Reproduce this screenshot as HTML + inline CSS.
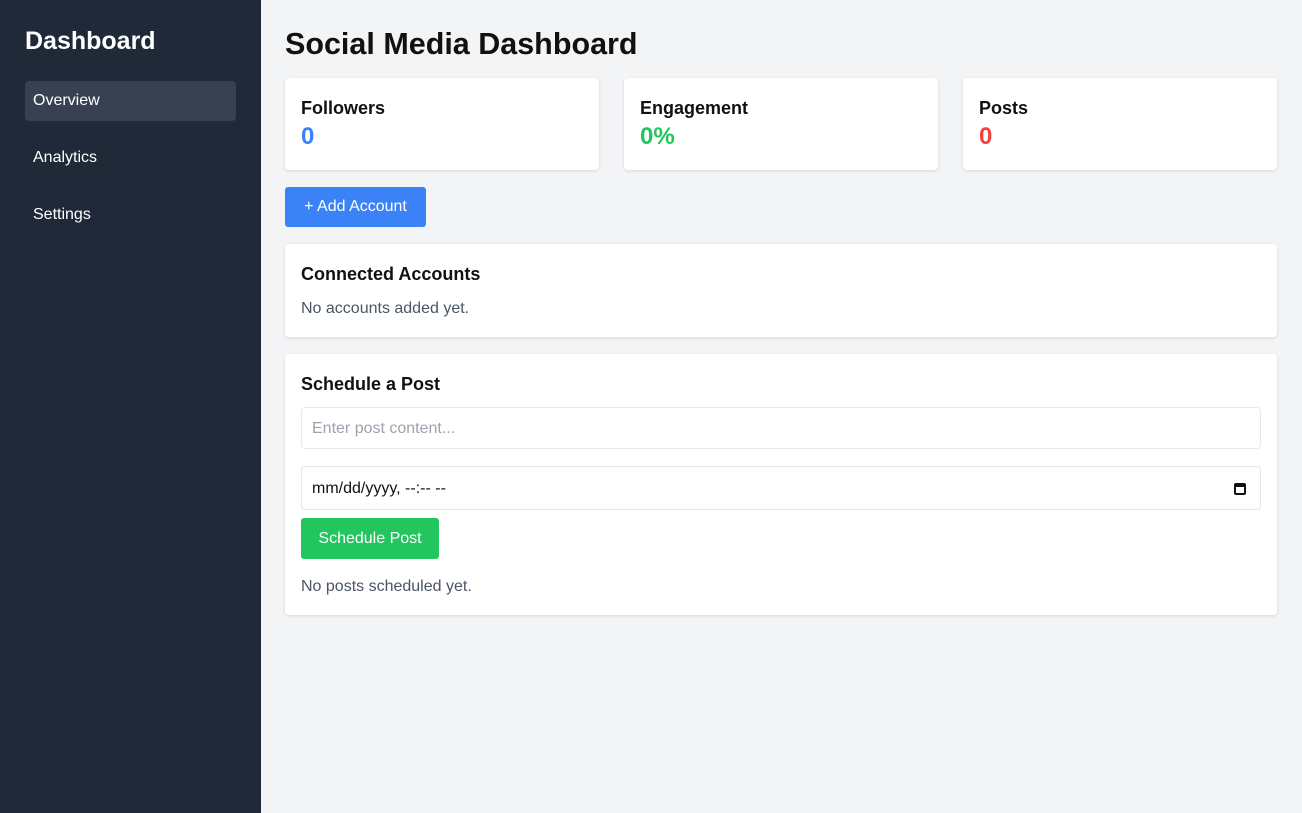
<!DOCTYPE html>
<html><head><style>
*{box-sizing:border-box;margin:0;padding:0}
body{width:1302px;height:813px;font-family:"Liberation Sans",sans-serif;background:#f3f4f6;position:relative;overflow:hidden}
.sb{position:absolute;left:0;top:0;width:261px;height:813px;background:#1f2937;color:#fff}
.sb h1{position:absolute;left:25px;top:27px;font-size:25px;font-weight:bold}
.nav{position:absolute;left:25px;width:211px;height:40px;border-radius:4px;padding:0 8px;line-height:40px;font-size:16px}
.main{position:absolute;left:285px;top:0;width:992px}
h2{position:absolute;top:27px;font-size:30.5px;font-weight:bold;color:#111}
.card{position:absolute;background:#fff;border-radius:4px;box-shadow:0 1px 3px rgba(0,0,0,.12)}
.stat{top:78px;width:314px;height:92px;padding:20px 16px}
.stat b{display:block;font-size:18px;color:#111}
.stat span{display:block;font-size:24px;font-weight:bold;margin-top:4px}
.btn{position:absolute;color:#fff;border-radius:3px;font-size:16px;text-align:center}
h3{font-size:18px;font-weight:bold;color:#111}
p{color:#4b5563;font-size:16px}
.inp{position:absolute;left:16px;width:960px;border:1px solid #e5e7eb;border-radius:4px;font-size:16px;padding:0 10px}
</style></head><body>
<div class="sb"><h1>Dashboard</h1>
<div class="nav" style="top:81px;background:#374151">Overview</div>
<div class="nav" style="top:138px">Analytics</div>
<div class="nav" style="top:195px">Settings</div></div>
<div class="main">
<h2>Social Media Dashboard</h2>
<div class="card stat" style="left:0"><b>Followers</b><span style="color:#3b82f6">0</span></div>
<div class="card stat" style="left:339px"><b>Engagement</b><span style="color:#22c55e">0%</span></div>
<div class="card stat" style="left:678px"><b>Posts</b><span style="color:#ef4444">0</span></div>
<div class="btn" style="left:0;top:187px;width:141px;height:40px;line-height:40px;background:#3b82f6">+ Add Account</div>
<div class="card" style="left:0;top:244px;width:992px;height:93px;padding:20px 16px"><h3>Connected Accounts</h3><p style="margin-top:15px">No accounts added yet.</p></div>
<div class="card" style="left:0;top:354px;width:992px;height:261px;padding:20px 16px"><h3>Schedule a Post</h3>
<div class="inp" style="top:53px;height:42px;line-height:42px;color:#9ca3af">Enter post content...</div>
<div class="inp" style="top:112px;height:44px;line-height:44px;color:#111">mm/dd/yyyy, --:-- --<span style="position:absolute;right:14px;top:16px;width:12px;height:12px;border:2px solid #111;border-top-width:4px;border-radius:2px"></span></div>
<div class="btn" style="left:16px;top:164px;width:138px;height:41px;line-height:41px;background:#22c55e">Schedule Post</div>
<p style="position:absolute;left:16px;top:224px">No posts scheduled yet.</p></div>
</div>
</body></html>
